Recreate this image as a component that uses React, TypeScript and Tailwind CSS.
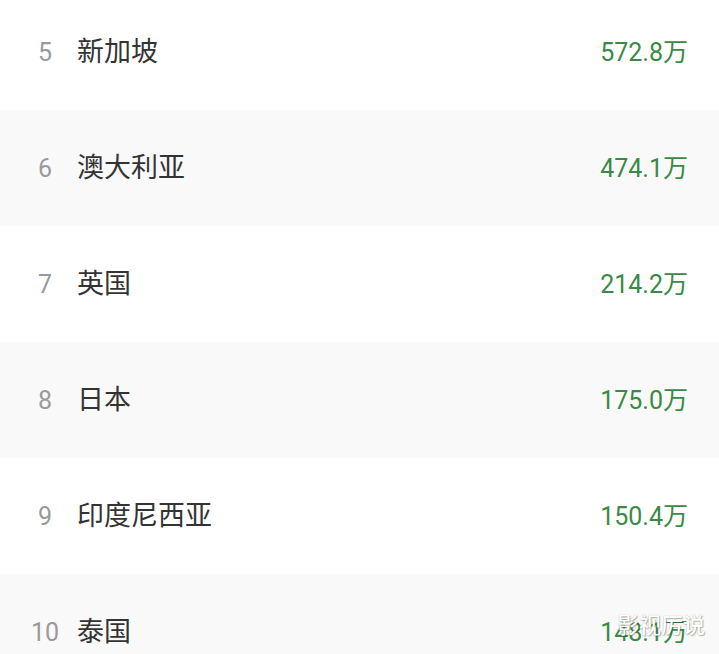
import React from "react";

const rows = [
  { n: 5, name: "新加坡", v: "572.8万" },
  { n: 6, name: "澳大利亚", v: "474.1万" },
  { n: 7, name: "英国", v: "214.2万" },
  { n: 8, name: "日本", v: "175.0万" },
  { n: 9, name: "印度尼西亚", v: "150.4万" },
  { n: 10, name: "泰国", v: "148.1万" },
];

export default function App() {
  return (
    <div
      className="relative w-[719px] h-[654px] overflow-hidden bg-white"
      style={{ fontFamily: 'Roboto, "Noto Sans CJK SC", sans-serif' }}
    >
      <div className="flex flex-col -mt-[6px]">
        {rows.map((r, i) => (
          <div
            key={r.n}
            className={`flex items-center h-[116px] shrink-0 ${i % 2 === 1 ? "bg-[#f9f9f9]" : "bg-white"}`}
          >
            <div className="pl-[27px] w-[63px] text-center text-[25px] text-[#9a9a9a] leading-none">
              <span className="inline-block w-[36px]">{r.n}</span>
            </div>
            <div className="ml-[14px] text-[27px] text-[#333333] leading-none">{r.name}</div>
            <div className="ml-auto pr-[31px] text-[25px] text-[#3a8a46] leading-none">{r.v}</div>
          </div>
        ))}
      </div>
      <div
        className="absolute right-[14px] bottom-[17px] text-[22px] leading-none font-medium text-white tracking-[0px]"
        style={{ textShadow: "0 0 1px rgba(0,0,0,0.35), 1px 1px 1px rgba(0,0,0,0.25)" }}
      >
        影视厉说
      </div>
    </div>
  );
}
